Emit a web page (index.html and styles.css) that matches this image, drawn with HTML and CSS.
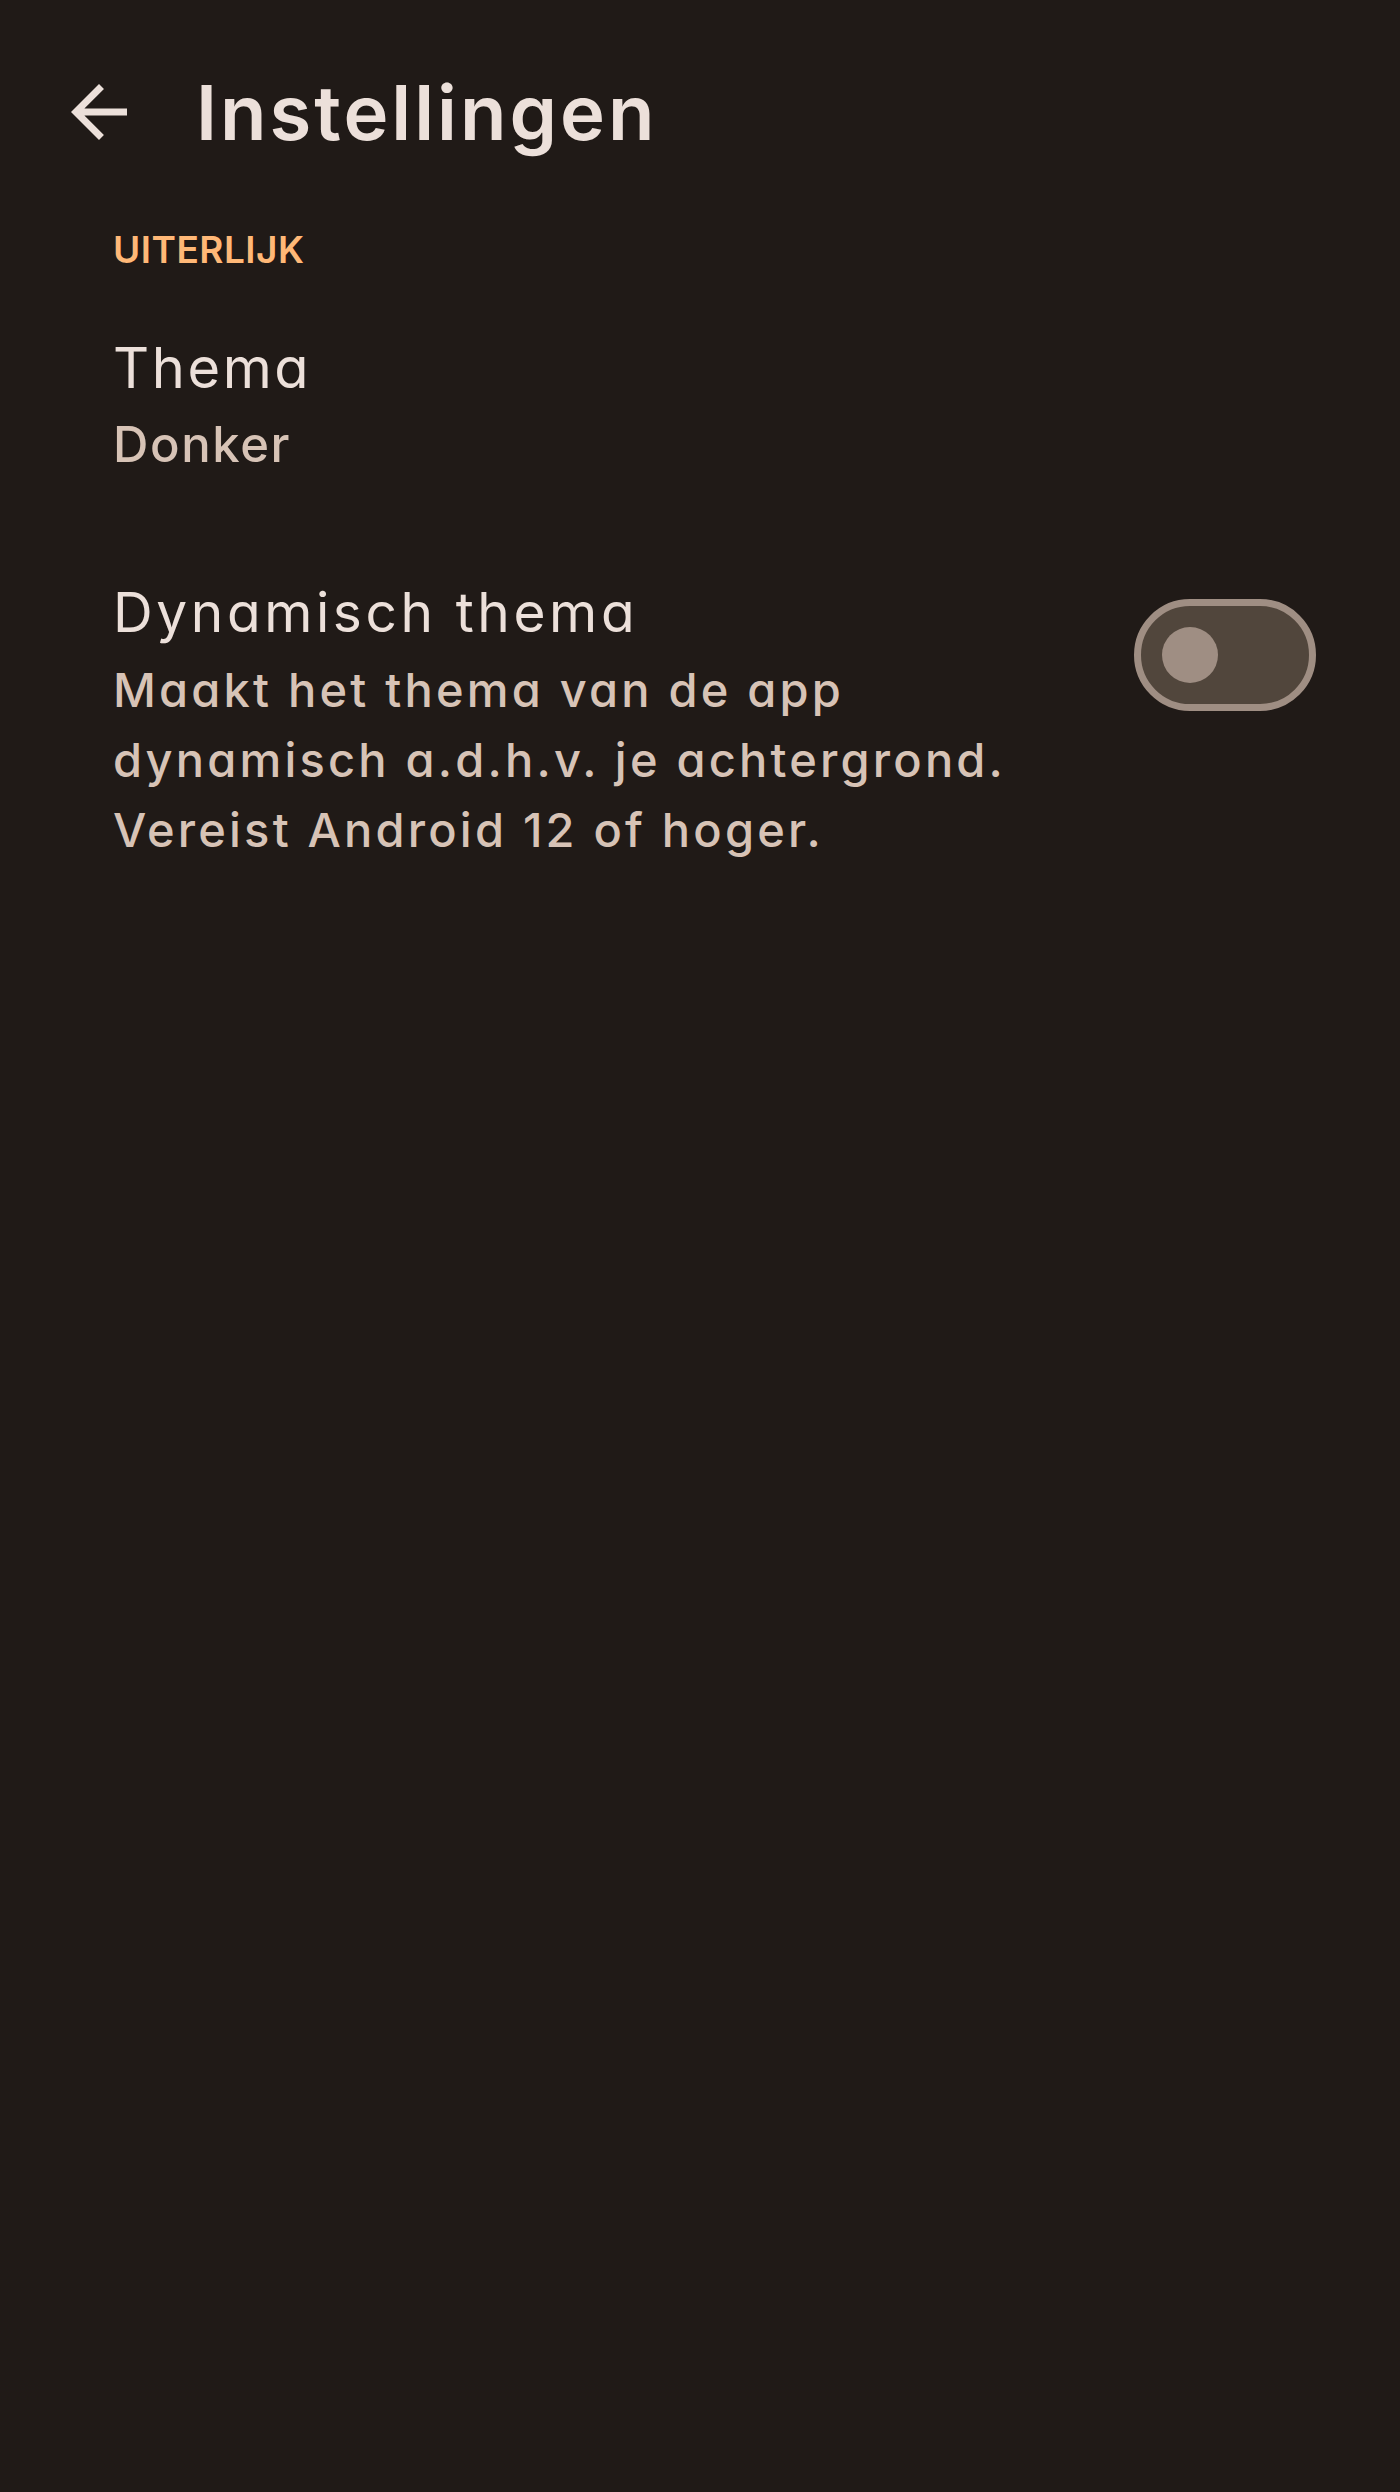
FILE: index.html
```html
<!DOCTYPE html>
<html lang="nl">
<head>
<meta charset="utf-8">
<title>Instellingen</title>
<link rel="stylesheet" href="styles.css">
</head>
<body>
<div class="screen">
  <header class="topbar">
    <button class="back" aria-label="Terug">
      <svg viewBox="0 0 24 24" width="84" height="84" aria-hidden="true">
        <path d="M20 11H7.83l5.59-5.59L12 4l-8 8 8 8 1.41-1.41L7.83 13H20v-2z" fill="currentColor"/>
      </svg>
    </button>
    <h1 class="title">Instellingen</h1>
  </header>

  <main class="content">
    <h2 class="section-label">UITERLIJK</h2>

    <div class="pref">
      <div class="pref-text">
        <div class="pref-title">Thema</div>
        <div class="pref-value">Donker</div>
      </div>
    </div>

    <div class="pref pref-switch">
      <div class="pref-text">
        <div class="pref-title pref-title-2">Dynamisch thema</div>
        <div class="pref-summary">Maakt het thema van de app dynamisch a.d.h.v. je achtergrond. Vereist Android 12 of hoger.</div>
      </div>
      <div class="switch" role="switch" aria-checked="false">
        <div class="thumb"></div>
      </div>
    </div>
  </main>
</div>
</body>
</html>
```

FILE: styles.css
```css
html, body {
  margin: 0;
  padding: 0;
  background: #201a17;
}

body {
  font-family: Inter, "Noto Sans", sans-serif;
  font-feature-settings: "cv11" 1;
  color: #ece0da;
}

.screen {
  width: 1400px;
  min-height: 2492px;
  background: #201a17;
}

.topbar {
  height: 224px;
  display: flex;
  align-items: center;
}

.back {
  margin-left: 57px;
  width: 84px;
  height: 84px;
  padding: 0;
  border: 0;
  background: none;
  color: #ece0da;
  display: flex;
}

.title {
  margin: 0 0 0 55px;
  font-size: 76px;
  line-height: 224px;
  font-weight: 600;
  letter-spacing: 3px;
  color: #ece0da;
}

.content {
  padding: 0 84px 0 113px;
}

.section-label {
  margin: 0;
  font-size: 37px;
  line-height: 52px;
  font-weight: 600;
  letter-spacing: 0.5px;
  color: #ffb877;
}

.pref {
  display: flex;
  align-items: flex-start;
}

.pref-text {
  flex: 1;
}

.pref-title {
  margin-top: 52px;
  font-size: 56px;
  line-height: 80px;
  font-weight: 400;
  letter-spacing: 2.6px;
  color: #ece0da;
}

.pref-value {
  font-size: 49px;
  line-height: 74px;
  font-weight: 500;
  letter-spacing: 1.6px;
  color: #d7c3b6;
}

.pref-switch {
  margin-top: 90px;
}

.pref-title-2 {
  margin-top: 0;
  font-size: 55px;
  letter-spacing: 3.6px;
}

.pref-summary {
  margin-top: 3px;
  padding-right: 40px;
  font-size: 47px;
  line-height: 70px;
  font-weight: 500;
  letter-spacing: 3.2px;
  color: #d7c3b6;
}

.switch {
  margin-top: 27px;
  margin-left: 24px;
  width: 182px;
  height: 112px;
  flex: none;
  box-sizing: border-box;
  border: 7px solid #9f8e83;
  border-radius: 56px;
  background: #51463c;
  display: flex;
  align-items: center;
  padding-left: 21px;
}

.thumb {
  width: 56px;
  height: 56px;
  border-radius: 50%;
  background: #9f8e83;
}
```
